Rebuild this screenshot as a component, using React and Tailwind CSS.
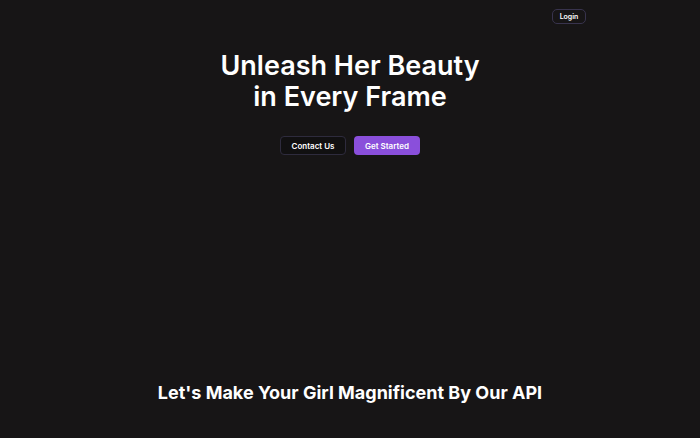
import React from "react";

export default function App() {
  return (
    <div
      className="min-h-screen w-full bg-[#171516] text-white"
      style={{ fontFamily: "Inter, 'Noto Sans', sans-serif" }}
    >
      <header className="mx-auto flex w-[472px] justify-end pt-[9px]">
        <button className="h-[15px] w-[34px] rounded-[5px] border border-[#38334d] text-[7px] font-semibold leading-none">
          Login
        </button>
      </header>

      <section className="flex flex-col items-center pt-[26px] text-center">
        <h1 className="text-[27px] font-semibold leading-[31px]">
          Unleash Her Beauty
          <br />
          in Every Frame
        </h1>
        <div className="mt-[24px] flex gap-[8px]">
          <button className="h-[19px] w-[66px] rounded-[4px] border border-[#2e2b3d] bg-[#111011] text-[8px] font-semibold">
            Contact Us
          </button>
          <button className="h-[19px] w-[66px] rounded-[4px] bg-[#8a4fdb] text-[8px] font-semibold">
            Get Started
          </button>
        </div>
      </section>

      <section className="flex justify-center pt-[227px]">
        <h2 className="text-[18px] font-bold leading-[22px]">
          Let's Make Your Girl Magnificent By Our API
        </h2>
      </section>
    </div>
  );
}
